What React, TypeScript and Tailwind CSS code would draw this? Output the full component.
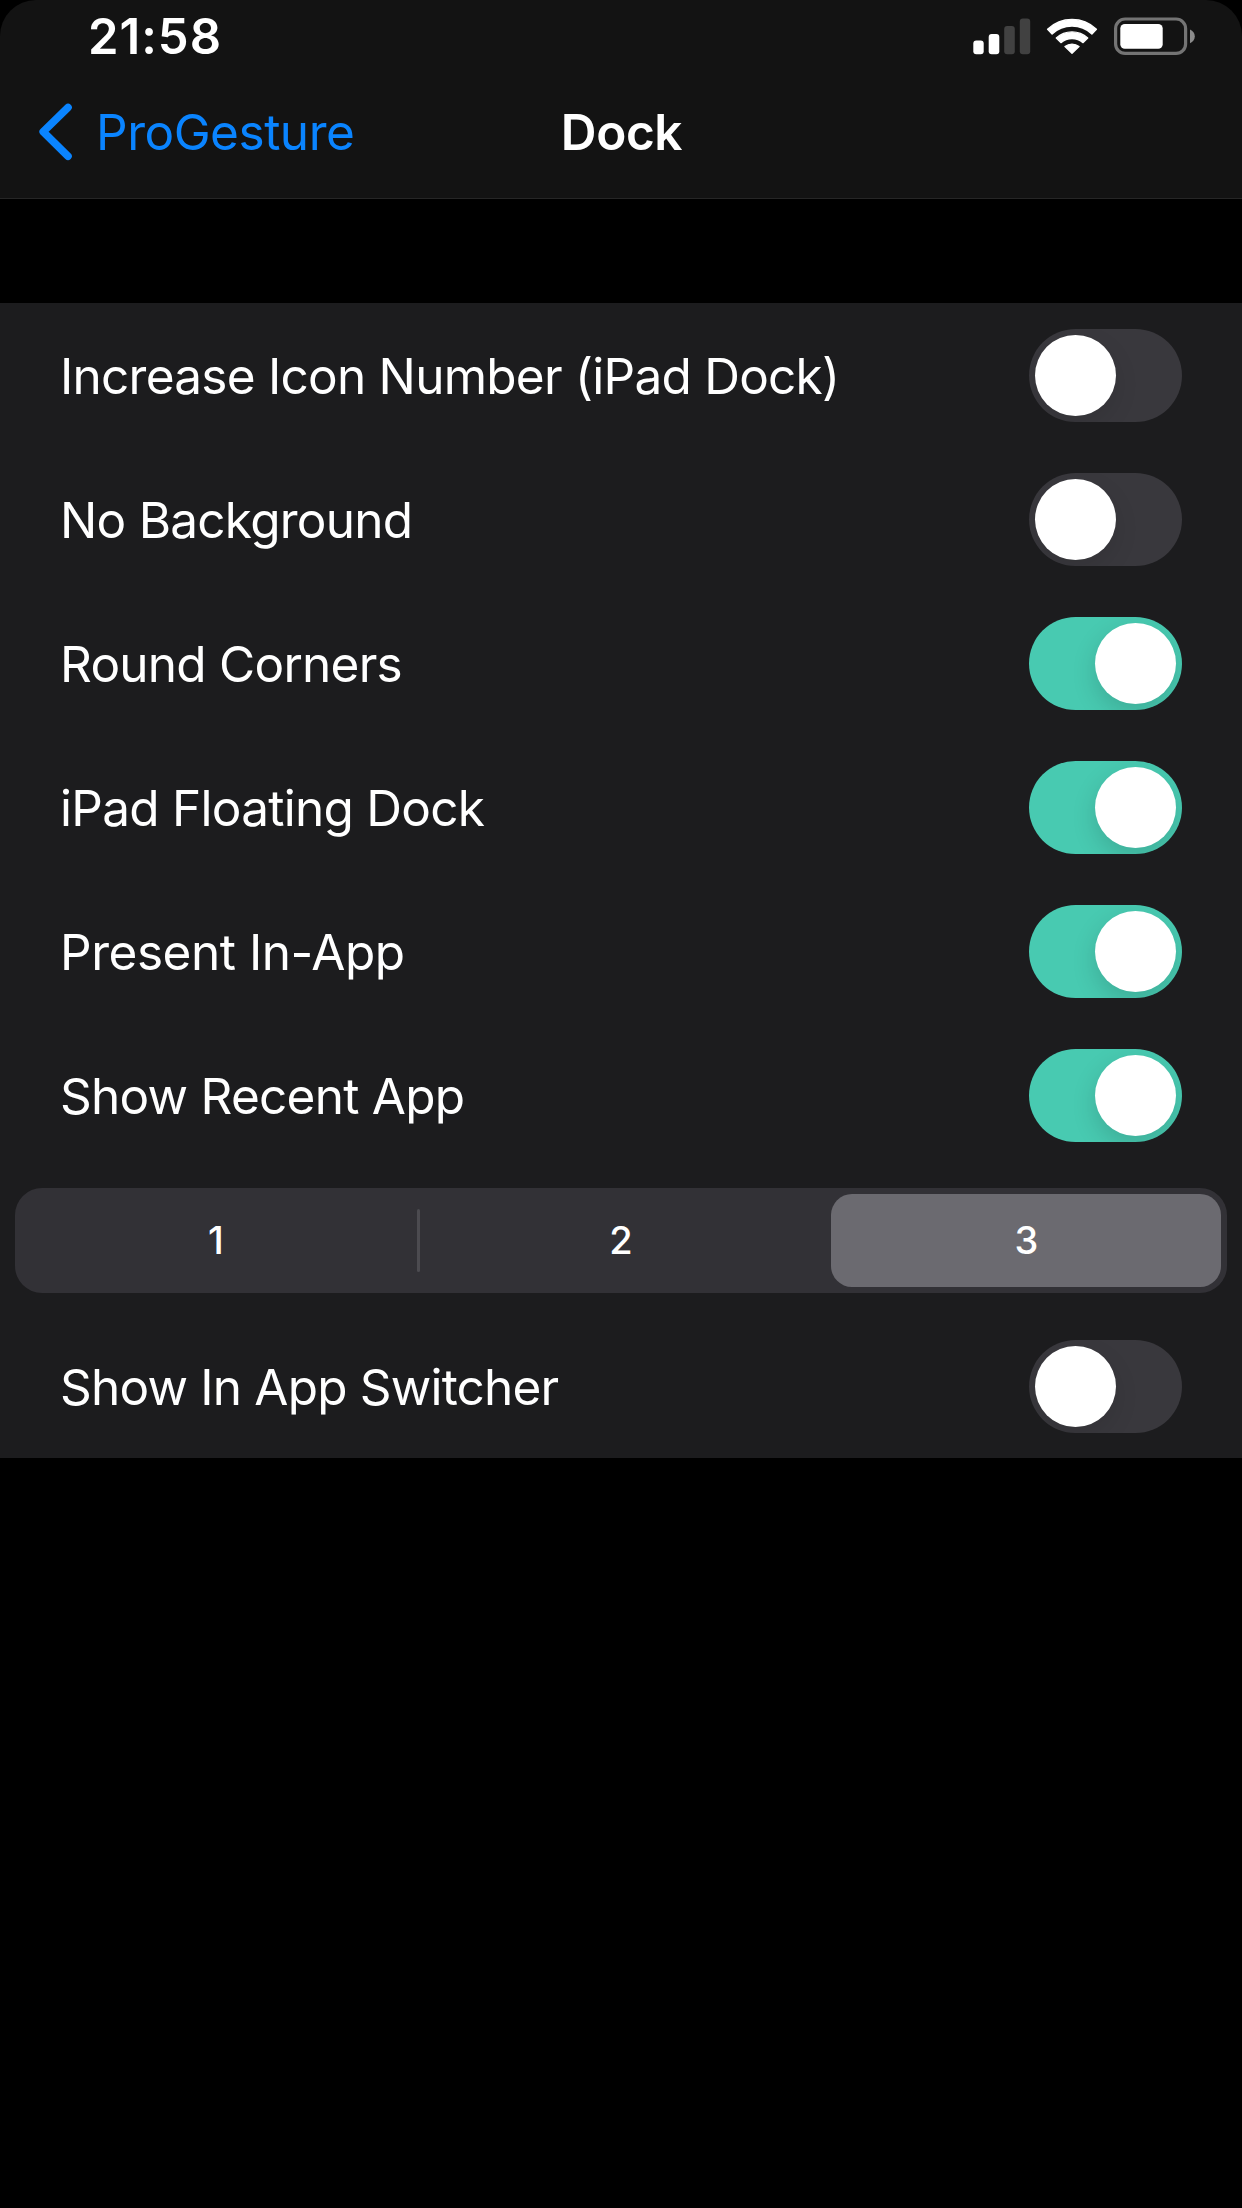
import { useState } from "react";

type Row = { label: string; on: boolean; tracking: string };

const dockRows: Row[] = [
  { label: "Increase Icon Number (iPad Dock)", on: false, tracking: "tracking-[-0.75px]" },
  { label: "No Background", on: false, tracking: "tracking-[-0.75px]" },
  { label: "Round Corners", on: true, tracking: "tracking-[-0.75px]" },
  { label: "iPad Floating Dock", on: true, tracking: "tracking-[-0.73px]" },
  { label: "Present In-App", on: true, tracking: "tracking-[-0.46px]" },
  { label: "Show Recent App", on: true, tracking: "tracking-[-0.74px]" },
];

const switcherRow: Row = {
  label: "Show In App Switcher",
  on: false,
  tracking: "tracking-[-0.8px]",
};

function SignalIcon() {
  return (
    <svg width="58" height="37" viewBox="0 0 58 37" fill="#fff">
      <rect x="0.3" y="22.5" width="10.4" height="13.8" rx="3" />
      <rect x="15.7" y="16" width="10.6" height="20.3" rx="3" />
      <rect x="31.2" y="8" width="10.6" height="28.3" rx="3" fill="#414141" />
      <rect x="46.8" y="0.5" width="10.4" height="35.8" rx="3" fill="#414141" />
    </svg>
  );
}

function WifiIcon() {
  return (
    <svg width="52" height="37" viewBox="0 0 52 37" fill="#fff" stroke="#fff" strokeWidth="1.4" strokeLinejoin="round">
      <path d="M1.6 11.3A35.4 35.4 0 0 1 50.4 11.3L45.9 15.9A29 29 0 0 0 6.1 15.9Z" />
      <path d="M10.3 20A23.2 23.2 0 0 1 41.7 20L37.1 24.6A16.9 16.9 0 0 0 14.9 24.6Z" />
      <path d="M19 28.6A11 11 0 0 1 33 28.6L26 35.3Z" />
    </svg>
  );
}

function BatteryIcon() {
  return (
    <svg width="82" height="38" viewBox="0 0 82 38">
      <rect x="1.6" y="2" width="70" height="34.4" rx="9.5" fill="none" stroke="#747474" strokeWidth="3.2" />
      <rect x="6.3" y="7" width="42.4" height="24.8" rx="4.5" fill="#fff" />
      <path d="M76 12.4C79 13.6 80.8 16.2 80.8 19.3S79 25 76 26.2Z" fill="#8c8c8c" />
    </svg>
  );
}

function Toggle({ on, onToggle }: { on: boolean; onToggle: () => void }) {
  return (
    <button
      type="button"
      role="switch"
      aria-checked={on}
      onClick={onToggle}
      className={`flex h-[93px] w-[153px] shrink-0 items-center overflow-hidden rounded-full p-1.5 ${
        on ? "justify-end bg-[#48cab1]" : "justify-start bg-[#39383d]"
      }`}
    >
      <span
        className={`size-[81px] rounded-full bg-white ${
          on ? "shadow-[0_9px_24px_rgba(0,0,0,0.15)]" : "shadow-[0_9px_24px_rgba(0,0,0,0.1)]"
        }`}
      />
    </button>
  );
}

function SettingRow({ row }: { row: Row }) {
  const [on, setOn] = useState(row.on);
  return (
    <div className="flex h-36 items-start justify-between pt-[26px] pr-[60px] pl-[60px]">
      <span className={`mt-[17px] text-[49.5px] leading-[60px] whitespace-nowrap ${row.tracking}`}>{row.label}</span>
      <Toggle on={on} onToggle={() => setOn(!on)} />
    </div>
  );
}

function SegmentedControl() {
  const [selected, setSelected] = useState(3);
  return (
    <div className="flex h-[147px] items-center px-[15px]">
      <div className="flex h-[105px] w-full items-center rounded-[27px] bg-[#323136] p-1.5">
        {[1, 2, 3].map((n) => (
          <div key={n} className="contents">
            {n > 1 && (
              <span className="flex h-[63px] w-[15px] shrink-0 justify-center">
                <span
                  className={`w-[3px] rounded-full ${
                    selected === n || selected === n - 1 ? "bg-transparent" : "bg-[#4c4b50]"
                  }`}
                />
              </span>
            )}
            <button
              type="button"
              onClick={() => setSelected(n)}
              className={`h-[93px] w-[390px] shrink-0 rounded-[21px] pb-0.5 text-[38px] leading-[46px] font-medium ${
                selected === n ? "bg-[#6b6a70] pl-px" : ""
              }`}
            >
              {n}
            </button>
          </div>
        ))}
      </div>
    </div>
  );
}

export default function App() {
  return (
    <div className="h-[2208px] w-[1242px] overflow-hidden bg-black font-['Inter',sans-serif] text-white">
      <header className="h-[199px] rounded-t-[36px] border-b border-[#262626] bg-[#131313]">
        <div className="flex h-[66px] items-start justify-between pr-[46px] pl-[88px]">
          <span className="pt-2 text-[49px] leading-[58px] font-semibold tracking-[1px]">21:58</span>
          <div className="flex pt-[18px]">
            <SignalIcon />
            <span className="w-[15px]" />
            <WifiIcon />
            <span className="w-4" />
            <span className="-mt-px">
              <BatteryIcon />
            </span>
          </div>
        </div>
        <div className="grid h-[132px] grid-cols-[1fr_auto_1fr] items-center">
          <button type="button" className="flex items-center pl-[38px] text-[#0a84ff]">
            <svg width="36" height="60" viewBox="0 0 36 60" fill="none" stroke="currentColor" strokeWidth="7.6" strokeLinecap="round" strokeLinejoin="round">
              <path d="M30 5.5L5.2 29.8L30 54.3" />
            </svg>
            <span className="ml-[22px] text-[49.5px] leading-[60px] tracking-[-0.48px]">ProGesture</span>
          </button>
          <h1 className="pl-px text-[49.5px] leading-[60px] font-semibold tracking-[-0.4px]">Dock</h1>
          <span />
        </div>
      </header>
      <main className="mt-[104px] bg-[#1c1c1e]">
        {dockRows.map((row) => (
          <SettingRow key={row.label} row={row} />
        ))}
        <SegmentedControl />
        <SettingRow row={switcherRow} />
      </main>
    </div>
  );
}
